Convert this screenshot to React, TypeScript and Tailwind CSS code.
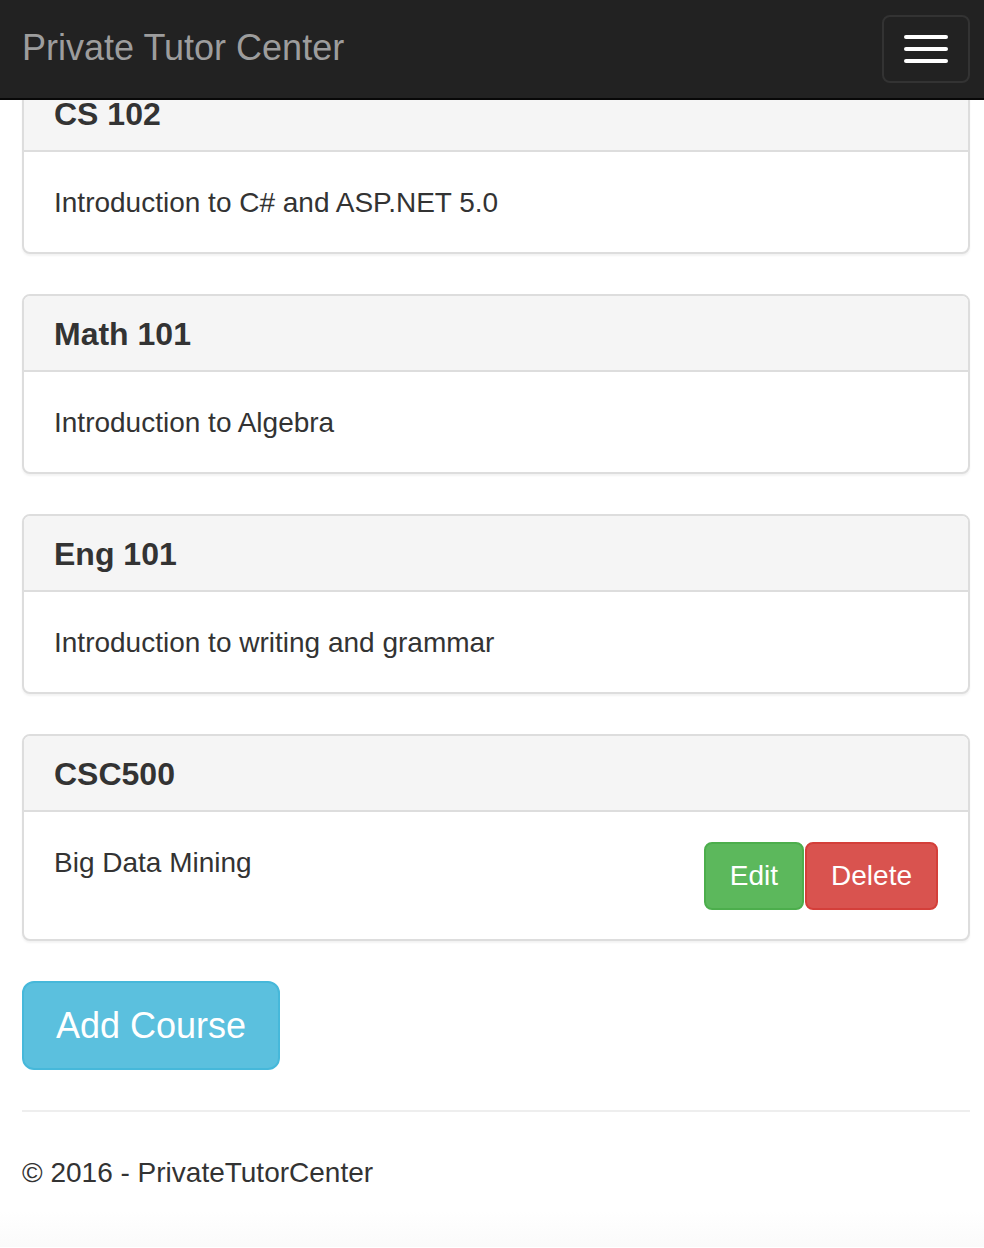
import React from "react";

const courses = [
  { code: "CS 102", desc: "Introduction to C# and ASP.NET 5.0" },
  { code: "Math 101", desc: "Introduction to Algebra" },
  { code: "Eng 101", desc: "Introduction to writing and grammar" },
];

function Panel({ code, desc, actions }: { code: string; desc: string; actions?: boolean }) {
  return (
    <div className="mb-[40px] rounded-[8px] border-2 border-[#ddd] bg-white shadow-[0_2px_2px_rgba(0,0,0,0.05)] overflow-hidden">
      <div className="flex h-[76px] items-center border-b-2 border-[#ddd] bg-[#f5f5f5] px-[30px] pt-[3px]">
        <h3 className="text-[32px] font-bold leading-[35px] text-[#333]">{code}</h3>
      </div>
      <div className="flex items-start justify-between px-[30px] pb-[29px] pt-[31px] text-[28px] leading-[40px]">
        <span>{desc}</span>
        {actions && (
          <div className="-mt-[1px] flex gap-[1px]">
            <button className="h-[68px] rounded-[8px] border-2 border-[#4cae4c] bg-[#5cb85c] px-[24px] text-[28px] leading-[40px] text-white">
              Edit
            </button>
            <button className="h-[68px] rounded-[8px] border-2 border-[#d43f3a] bg-[#d9534f] px-[24px] text-[28px] leading-[40px] text-white">
              Delete
            </button>
          </div>
        )}
      </div>
    </div>
  );
}

export default function App() {
  return (
    <div className="relative h-[1248px] overflow-hidden bg-white font-['Liberation_Sans',Arial,sans-serif] text-[#333]">
      <nav className="fixed inset-x-0 top-0 z-10 flex h-[100px] items-center justify-between border-b-2 border-[#080808] bg-[#222] pl-[22px] pr-[14px]">
        <span className="-mt-[2px] text-[36px] leading-[40px] text-[#9d9d9d]">Private Tutor Center</span>
        <button className="flex h-[68px] w-[88px] flex-col items-center justify-center gap-[8px] rounded-[8px] border-2 border-[#333]">
          <span className="block h-[4px] w-[44px] rounded-[2px] bg-white" />
          <span className="block h-[4px] w-[44px] rounded-[2px] bg-white" />
          <span className="block h-[4px] w-[44px] rounded-[2px] bg-white" />
        </button>
      </nav>
      <main className="pl-[22px] pr-[14px] pt-[74px]">
        {courses.map((c) => (
          <Panel key={c.code} code={c.code} desc={c.desc} />
        ))}
        <Panel code="CSC500" desc="Big Data Mining" actions />
        <button className="h-[89px] rounded-[12px] border-2 border-[#46b8da] bg-[#5bc0de] px-[32px] text-[36px] leading-[48px] text-white">
          Add Course
        </button>
        <hr className="mt-[40px] border-0 border-t-2 border-[#eee]" />
        <footer className="pt-[41px] pb-[18px] text-[28px] leading-[40px]">© 2016 - PrivateTutorCenter</footer>
      </main>
      <div className="h-[36px] bg-gradient-to-b from-white to-[#fafafa]" />
    </div>
  );
}
